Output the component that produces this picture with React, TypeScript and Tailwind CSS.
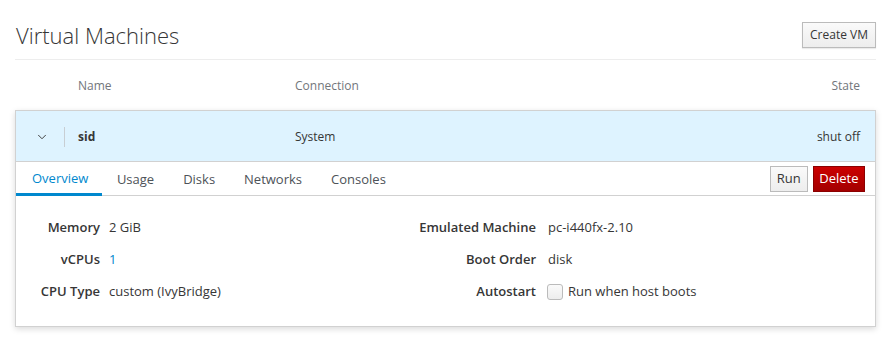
import { ChevronDown } from 'lucide-react';

const details = {
  left: [
    { label: 'Memory', value: '2 GiB' },
    { label: 'vCPUs', value: '1', link: true },
    { label: 'CPU Type', value: 'custom (IvyBridge)' },
  ],
  right: [
    { label: 'Emulated Machine', value: 'pc-i440fx-2.10' },
    { label: 'Boot Order', value: 'disk' },
  ],
};

const tabs = ['Overview', 'Usage', 'Disks', 'Networks', 'Consoles'];

export default function App() {
  return (
    <div className="min-h-[337px] bg-white pl-[15px] pr-[13px] text-[12px] text-[#363636] font-['Open_Sans',sans-serif]">
      <div className="flex items-end justify-between pl-px pt-[22px] pb-[10px] border-b border-[#ededed]">
        <h1 className="text-[22px] font-light leading-[27px] text-[#363636]">Virtual Machines</h1>
        <button className="h-[26px] px-[7px] mb-[1px] border border-[#bbb] bg-gradient-to-b from-[#fafafa] to-[#ededed] text-[12px] text-[#363636] shadow-[0_1px_1px_rgba(3,3,3,0.08)]">
          Create VM
        </button>
      </div>

      <div className="flex h-[50px] items-center pt-[2px] text-[#72767b]">
        <div className="w-[63px] shrink-0" />
        <div className="w-[217px] shrink-0">Name</div>
        <div className="flex-1">Connection</div>
        <div className="pr-[16px]">State</div>
      </div>

      <div className="border border-[#d1d1d1] shadow-[0_2px_6px_rgba(3,3,3,0.15)]">
        <div className="flex h-[51px] items-center pt-[2px] bg-[#def3ff] border-b border-[#d1d1d1]">
          <div className="flex w-[48px] shrink-0 justify-end pr-[15px]">
            <ChevronDown size={14} strokeWidth={1.6} className="text-[#363636]" />
          </div>
          <div className="h-[20px] w-px bg-[#c8ced3]" />
          <div className="w-[230px] shrink-0 pl-[13px] font-bold text-[#363636]">sid</div>
          <div className="flex-1">System</div>
          <div className="pr-[15px]">shut off</div>
        </div>

        <div className="flex h-[34px] items-stretch border-b border-[#d1d1d1] text-[13px]">
          {tabs.map((t, i) => (
            <div
              key={t}
              className={
                i === 0
                  ? 'flex items-center pl-[16px] pr-[14px] text-[#0088ce] border-b-[3px] border-[#0088ce] pt-[2px] -mb-px'
                  : 'flex items-center px-[14.5px] text-[#4d5258] pt-[2px]'
              }
            >
              {t}
            </div>
          ))}
          <div className="ml-auto flex items-center gap-[5px] pr-[10px]">
            <button className="h-[26px] px-[6px] border border-[#bbb] bg-gradient-to-b from-[#fafafa] to-[#ededed] text-[#363636]">
              Run
            </button>
            <button className="h-[26px] px-[5.5px] border border-[#8b0000] bg-gradient-to-b from-[#cc0000] to-[#a30000] text-white">
              Delete
            </button>
          </div>
        </div>

        <div className="flex pt-[16px] pb-[18px] text-[13px]">
          <div className="w-[380px] grid grid-cols-[84px_1fr] gap-x-[9px] auto-rows-[32px] items-center">
            {details.left.map((d) => (
              <div key={d.label} className="contents">
                <div className="text-right font-semibold text-[#363636]">{d.label}</div>
                <div className={d.link ? 'text-[#0088ce]' : 'text-[#363636]'}>{d.value}</div>
              </div>
            ))}
          </div>
          <div className="grid grid-cols-[140px_1fr] gap-x-[12px] auto-rows-[32px] items-center">
            {details.right.map((d) => (
              <div key={d.label} className="contents">
                <div className="text-right font-semibold text-[#363636]">{d.label}</div>
                <div>{d.value}</div>
              </div>
            ))}
            <div className="text-right font-semibold text-[#363636]">Autostart</div>
            <label className="flex items-center gap-[5px] -ml-px">
              <span className="inline-block h-[16px] w-[16px] rounded-[3px] border border-[#bbb] bg-gradient-to-b from-[#fafafa] to-[#ededed]" />
              <span>Run when host boots</span>
            </label>
          </div>
        </div>
      </div>
    </div>
  );
}
